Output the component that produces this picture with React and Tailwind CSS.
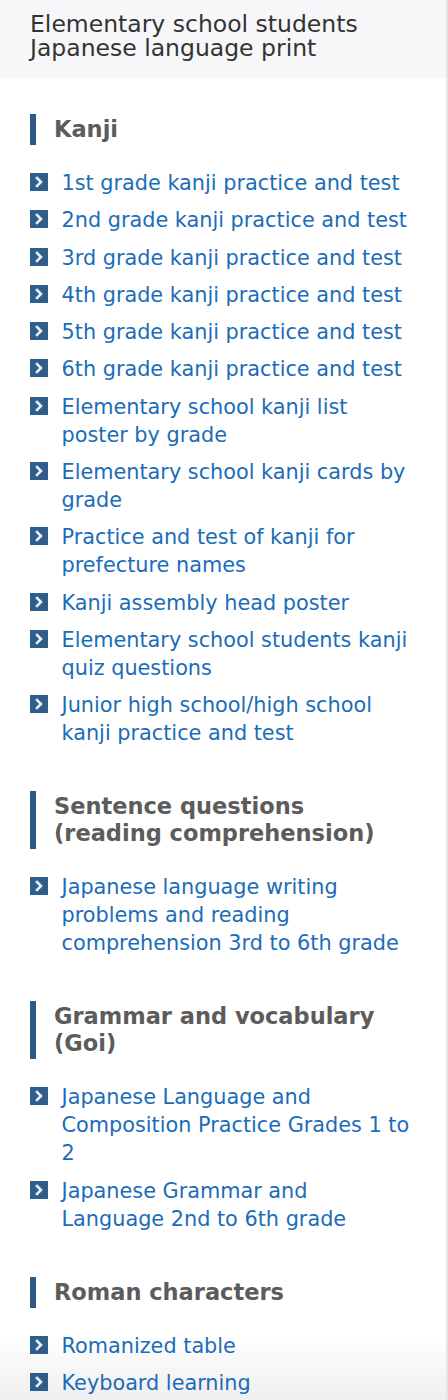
import React from "react";

const sections = [
  {
    title: "Kanji",
    items: [
      "1st grade kanji practice and test",
      "2nd grade kanji practice and test",
      "3rd grade kanji practice and test",
      "4th grade kanji practice and test",
      "5th grade kanji practice and test",
      "6th grade kanji practice and test",
      "Elementary school kanji list poster by grade",
      "Elementary school kanji cards by grade",
      "Practice and test of kanji for prefecture names",
      "Kanji assembly head poster",
      "Elementary school students kanji quiz questions",
      "Junior high school/high school kanji practice and test",
    ],
  },
  {
    title: "Sentence questions (reading comprehension)",
    items: ["Japanese language writing problems and reading comprehension 3rd to 6th grade"],
  },
  {
    title: "Grammar and vocabulary (Goi)",
    items: [
      "Japanese Language and Composition Practice Grades 1 to 2",
      "Japanese Grammar and Language 2nd to 6th grade",
    ],
  },
  {
    title: "Roman characters",
    items: ["Romanized table", "Keyboard learning"],
  },
];

function Chevron() {
  return (
    <span className="mt-[4px] flex h-[18px] w-[18px] shrink-0 items-center justify-center bg-[#2f5e8a]">
      <svg width="18" height="18" viewBox="0 0 18 18">
        <polyline
          points="7,5 11,9 7,13"
          fill="none"
          stroke="#e9eef4"
          strokeWidth="2.6"
          strokeLinecap="square"
          strokeLinejoin="miter"
        />
      </svg>
    </span>
  );
}

export default function App() {
  return (
    <div className="relative h-[1400px] w-[448px] overflow-hidden border-r-2 border-[#e4e4e9] bg-white font-['DejaVu_Sans',sans-serif]">
      <div className="pointer-events-none absolute bottom-0 left-0 right-0 z-0 h-[64px] bg-gradient-to-b from-[rgba(255,255,255,0)] to-[#efefef]" />
      <header className="relative z-10 bg-[#f7f7f9] px-[30px] pb-[18px] pt-[12px]">
        <h1 className="text-[23.5px] font-normal leading-[24px] text-[#333333]">
          Elementary school students
          <br />
          Japanese language print
        </h1>
      </header>
      <main className="relative z-10 flex flex-col gap-[44px] pt-[36px]">
        {sections.map((s) => (
          <section key={s.title} className="flex flex-col">
            <h2 className="ml-[30px] mr-[30px] border-l-[6px] border-[#2d5a85] py-[2px] pl-[18px] text-[22.5px] font-bold leading-[27px] text-[#5c5c5c]">
              {s.title}
            </h2>
            <ul className="mt-[24px] flex flex-col gap-[9.3px]">
              {s.items.map((it) => (
                <li key={it} className="flex items-start gap-[13.5px] pl-[30px] pr-[32px]">
                  <Chevron />
                  <a className="text-[20.8px] leading-[28px] text-[#1b6cb9]">{it}</a>
                </li>
              ))}
            </ul>
          </section>
        ))}
      </main>
    </div>
  );
}
